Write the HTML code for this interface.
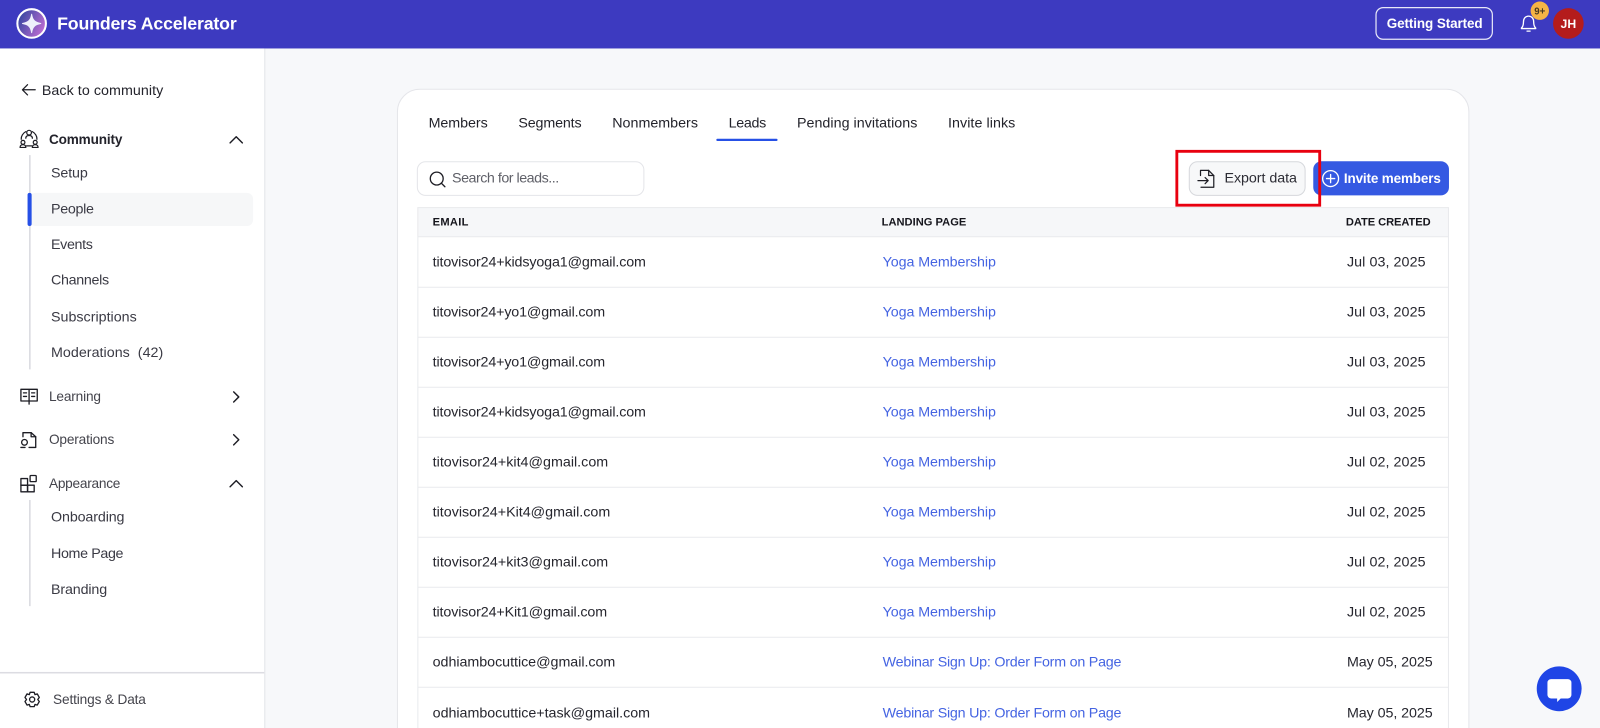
<!DOCTYPE html>
<html lang="en">
<head>
<meta charset="utf-8">
<title>Founders Accelerator</title>
<style>
html,body{margin:0;padding:0;width:1600px;height:728px;overflow:hidden;background:#f7f8fa}
svg{display:block}
text{font-family:"Liberation Sans",Arial,sans-serif;font-size:14px;fill:#23232b;white-space:pre}
.b{font-weight:700}
.nav{fill:#3a3a44}
.ar{font-size:13.4px;fill:#44444c}
.em{fill:#26262e}
.ln{fill:#4564e2}
.th{font-size:10.9px;font-weight:700;fill:#15151c}
.ic{fill:none;stroke:#1d1d24;stroke-width:1.4;stroke-linecap:round;stroke-linejoin:round}
.sep{stroke:#e9eaed;stroke-width:1}
</style>
</head>
<body>
<svg xmlns="http://www.w3.org/2000/svg" width="1600" height="728" viewBox="0 0 1568 713.44" preserveAspectRatio="none">
<defs>
<linearGradient id="g" x1="0" y1="0" x2="1" y2="0.5">
<stop offset="0" stop-color="#23419a"/><stop offset="1" stop-color="#b66bd0"/>
</linearGradient>
</defs>
<rect width="1568" height="714" fill="#f7f8fa"/>

<!-- header -->
<rect width="1568" height="47.5" fill="#3d3ac0"/>
<circle cx="31" cy="23" r="14" fill="url(#g)" stroke="#fff" stroke-width="2"/>
<path d="M31 14C31.800 19.500 34 22 40 23 34 24 31.800 26.500 31 32 30.200 26.500 28 24 22 23 28 22 30.200 19.500 31 14Z" fill="#eef0fb" stroke="#eef0fb" stroke-width="1" stroke-linejoin="round"/>
<text x="56" y="29" class="b" style="font-size:17.400px;fill:#fff" textLength="176">Founders Accelerator</text>
<rect x="1348.500" y="7.500" width="114" height="31" rx="7" fill="none" stroke="#e8e8f8" stroke-width="1.200"/>
<text x="1359" y="27.500" class="b" style="font-size:13.200px;fill:#fff" textLength="94">Getting Started</text>
<path d="M1491 28V27.500C1492.500 26 1493 24.500 1493 21.500 1493 18 1495 15.800 1498 15.800S1503 18 1503 21.500C1503 24.500 1503.500 26 1505 27.500V28ZM1496.500 30.500H1499.500" fill="none" stroke="#fff" stroke-width="1.300" stroke-linecap="round" stroke-linejoin="round"/>
<circle cx="1509" cy="10.500" r="9" fill="#f5b445"/>
<text x="1509" y="14" text-anchor="middle" class="b" style="font-size:9.500px;fill:#4a3a20">9+</text>
<circle cx="1537" cy="23" r="15" fill="#b41c1c"/>
<text x="1537" y="27.300" text-anchor="middle" class="b" style="font-size:12px;fill:#fff">JH</text>

<!-- sidebar -->
<rect y="47.500" width="259" height="666" fill="#fff"/>
<rect x="259" y="47.500" width="1" height="666" fill="#e4e5e9"/>
<path class="ic" d="M34.500 88H22M27 83L22 88 27 93" style="stroke-width:1.200"/>
<text x="41" y="93" textLength="119">Back to community</text>

<g class="ic" style="stroke-width:1.200">
<circle cx="28.500" cy="130" r="2.300"/><path d="M25.300 135.500C25.300 133.500 26.500 132.800 28.500 132.800S31.700 133.500 31.700 135.500"/>
<circle cx="22.500" cy="139.500" r="1.900"/><path d="M19.700 144.500C19.700 142.800 20.700 141.800 22.500 141.800S25.300 142.800 25.300 144.500Z"/>
<circle cx="34.500" cy="139.500" r="1.900"/><path d="M31.700 144.500C31.700 142.800 32.700 141.800 34.500 141.800S37.300 142.800 37.300 144.500Z"/>
<path d="M25.300 129C22.500 130.500 20.500 133.500 20.800 136.500M31.700 129C34.500 130.500 36.500 133.500 36.200 136.500M26 143H31"/>
</g>
<text x="48" y="141" class="b" textLength="72" style="font-size:13.300px">Community</text>
<path class="ic" d="M225.500 140L231.500 134 237.500 140"/>

<rect x="28.500" y="152" width="1.500" height="210" fill="#d9dadf"/>
<rect x="29" y="189" width="219" height="32.500" rx="6" fill="#f6f7f8"/>
<rect x="27" y="189" width="4" height="32.500" rx="2" fill="#2650e6"/>
<text x="50" y="174" class="nav" textLength="36">Setup</text>
<text x="50" y="209" class="nav" textLength="42">People</text>
<text x="50" y="244" class="nav" textLength="41">Events</text>
<text x="50" y="279" class="nav" textLength="57">Channels</text>
<text x="50" y="315" class="nav" textLength="84">Subscriptions</text>
<text x="50" y="350" class="nav" textLength="110">Moderations  (42)</text>

<g class="ic" style="stroke-width:1.300">
<path d="M28.500 381.500H20.500V393H28.500M28.500 381.500H36.500V393H28.500M28.500 381.500V396"/>
<path d="M23 385H26M23 388.500H26M31 385H34M31 388.500H34"/>
</g>
<text x="48" y="393" class="ar" textLength="51">Learning</text>
<path class="ic" d="M229 384L234 389 229 394"/>

<g class="ic" style="stroke-width:1.300">
<path d="M22.500 428V424H30.500L35 428V438.500H28.500"/><path d="M30.500 424V428H35"/>
<circle cx="24" cy="433.500" r="2.800"/>
<path d="M20.500 438.500H24.500"/>
</g>
<text x="48" y="435" class="ar" textLength="64">Operations</text>
<path class="ic" d="M229 426L234 431 229 436"/>

<g class="ic" style="stroke-width:1.300">
<rect x="20.500" y="469" width="6.500" height="6.500"/><rect x="27" y="475.500" width="6.500" height="6.500"/><rect x="20.500" y="475.500" width="6.500" height="6.500"/><rect x="29.500" y="466" width="6" height="6" rx="0.800"/>
</g>
<text x="48" y="478" class="ar" textLength="70">Appearance</text>
<path class="ic" d="M225.500 477L231.500 471 237.500 477"/>

<rect x="28.500" y="490" width="1.500" height="104" fill="#d9dadf"/>
<text x="50" y="511" class="nav" textLength="72">Onboarding</text>
<text x="50" y="547" class="nav" textLength="71">Home Page</text>
<text x="50" y="582" class="nav" textLength="55">Branding</text>

<rect y="658.500" width="259" height="1.500" fill="#dcdce2"/>
<g class="ic" style="stroke-width:1.300">
<circle cx="31.500" cy="685.500" r="2.500"/>
<path d="M29.500 678.500H33.500L34.300 680.700 36.500 680 38.500 683.500 37 685.500 38.500 687.500 36.500 691 34.300 690.300 33.500 692.500H29.500L28.700 690.300 26.500 691 24.500 687.500 26 685.500 24.500 683.500 26.500 680 28.700 680.700Z"/>
</g>
<text x="52" y="690" class="ar" textLength="91">Settings &amp; Data</text>

<!-- card -->
<rect x="389.500" y="87.500" width="1050" height="660" rx="22" fill="#fff" stroke="#e5e6ea" stroke-width="1"/>

<text x="420" y="125" textLength="58">Members</text>
<text x="508" y="125" textLength="62">Segments</text>
<text x="600" y="125" textLength="84">Nonmembers</text>
<text x="714" y="125" textLength="37">Leads</text>
<text x="781" y="125" textLength="118">Pending invitations</text>
<text x="929" y="125" textLength="66">Invite links</text>
<rect x="702" y="136" width="60" height="2.200" rx="1" fill="#2650e6"/>

<rect x="409" y="158.500" width="222" height="33" rx="8" fill="#fff" stroke="#e4e5e9"/>
<circle cx="428" cy="175" r="6.300" fill="none" stroke="#1d1d24" stroke-width="1.300"/>
<path d="M432.500 179.500L436 183" fill="none" stroke="#1d1d24" stroke-width="1.300" stroke-linecap="round"/>
<text x="443" y="179" textLength="105" style="fill:#5f6068">Search for leads...</text>

<rect x="1165.500" y="158.500" width="113.500" height="33" rx="8" fill="#f7f8f9" stroke="#d6d8dc"/>
<g class="ic" style="stroke-width:1.200">
<path d="M1176.500 172V167H1184.500L1189.500 172V183.500H1177"/><path d="M1184.500 167V172H1189.500"/>
<path d="M1174 177H1184M1181 174L1184 177 1181 180"/>
</g>
<text x="1200" y="179" textLength="71" style="fill:#2c2c34">Export data</text>

<rect x="1287" y="158" width="133" height="33.500" rx="8" fill="#3559e2"/>
<circle cx="1304" cy="175" r="7.800" fill="none" stroke="#fff" stroke-width="1.300"/>
<path d="M1304 171V179M1300 175H1308" stroke="#fff" stroke-width="1.300" stroke-linecap="round"/>
<text x="1317" y="179.300" class="b" style="font-size:13.200px;fill:#fff" textLength="95">Invite members</text>

<rect x="1153.300" y="148.300" width="140" height="52.800" fill="none" stroke="#e8000f" stroke-width="2.800"/>

<!-- table -->
<rect x="409" y="203" width="1011" height="29" fill="#f6f7f9"/>
<path class="sep" d="M409 203.500H1420M409.500 203V714M1419.500 203V714M409 232H1420M409 281.500H1420M409 330.500H1420M409 379.500H1420M409 428.500H1420M409 477.500H1420M409 526.500H1420M409 575.500H1420M409 624.500H1420M409 673.500H1420"/>
<text x="424" y="221" class="th" textLength="35">EMAIL</text>
<text x="864" y="221" class="th" textLength="83">LANDING PAGE</text>
<text x="1319" y="221" class="th" textLength="83">DATE CREATED</text>

<text x="424" y="261" class="em" textLength="209">titovisor24+kidsyoga1@gmail.com</text>
<text x="865" y="261" class="ln" textLength="111">Yoga Membership</text>
<text x="1320" y="261" class="em" textLength="77">Jul 03, 2025</text>

<text x="424" y="310" class="em" textLength="169">titovisor24+yo1@gmail.com</text>
<text x="865" y="310" class="ln" textLength="111">Yoga Membership</text>
<text x="1320" y="310" class="em" textLength="77">Jul 03, 2025</text>

<text x="424" y="359" class="em" textLength="169">titovisor24+yo1@gmail.com</text>
<text x="865" y="359" class="ln" textLength="111">Yoga Membership</text>
<text x="1320" y="359" class="em" textLength="77">Jul 03, 2025</text>

<text x="424" y="408" class="em" textLength="209">titovisor24+kidsyoga1@gmail.com</text>
<text x="865" y="408" class="ln" textLength="111">Yoga Membership</text>
<text x="1320" y="408" class="em" textLength="77">Jul 03, 2025</text>

<text x="424" y="457" class="em" textLength="172">titovisor24+kit4@gmail.com</text>
<text x="865" y="457" class="ln" textLength="111">Yoga Membership</text>
<text x="1320" y="457" class="em" textLength="77">Jul 02, 2025</text>

<text x="424" y="506" class="em" textLength="174">titovisor24+Kit4@gmail.com</text>
<text x="865" y="506" class="ln" textLength="111">Yoga Membership</text>
<text x="1320" y="506" class="em" textLength="77">Jul 02, 2025</text>

<text x="424" y="555" class="em" textLength="172">titovisor24+kit3@gmail.com</text>
<text x="865" y="555" class="ln" textLength="111">Yoga Membership</text>
<text x="1320" y="555" class="em" textLength="77">Jul 02, 2025</text>

<text x="424" y="604" class="em" textLength="171">titovisor24+Kit1@gmail.com</text>
<text x="865" y="604" class="ln" textLength="111">Yoga Membership</text>
<text x="1320" y="604" class="em" textLength="77">Jul 02, 2025</text>

<text x="424" y="653" class="em" textLength="179">odhiambocuttice@gmail.com</text>
<text x="865" y="653" class="ln" textLength="234">Webinar Sign Up: Order Form on Page</text>
<text x="1320" y="653" class="em" textLength="84">May 05, 2025</text>

<text x="424" y="703" class="em" textLength="213">odhiambocuttice+task@gmail.com</text>
<text x="865" y="703" class="ln" textLength="234">Webinar Sign Up: Order Form on Page</text>
<text x="1320" y="703" class="em" textLength="84">May 05, 2025</text>

<!-- chat -->
<circle cx="1528" cy="675" r="22" fill="#1f45e6"/>
<path d="M1520 665.500H1536.500A3.500 3.500 0 0 1 1540 669V681A3.500 3.500 0 0 1 1536.500 684.500H1529.500L1526 688V684.500H1520A3.500 3.500 0 0 1 1516.500 681V669A3.500 3.500 0 0 1 1520 665.500Z" fill="#fff"/>
</svg>
</body>
</html>
